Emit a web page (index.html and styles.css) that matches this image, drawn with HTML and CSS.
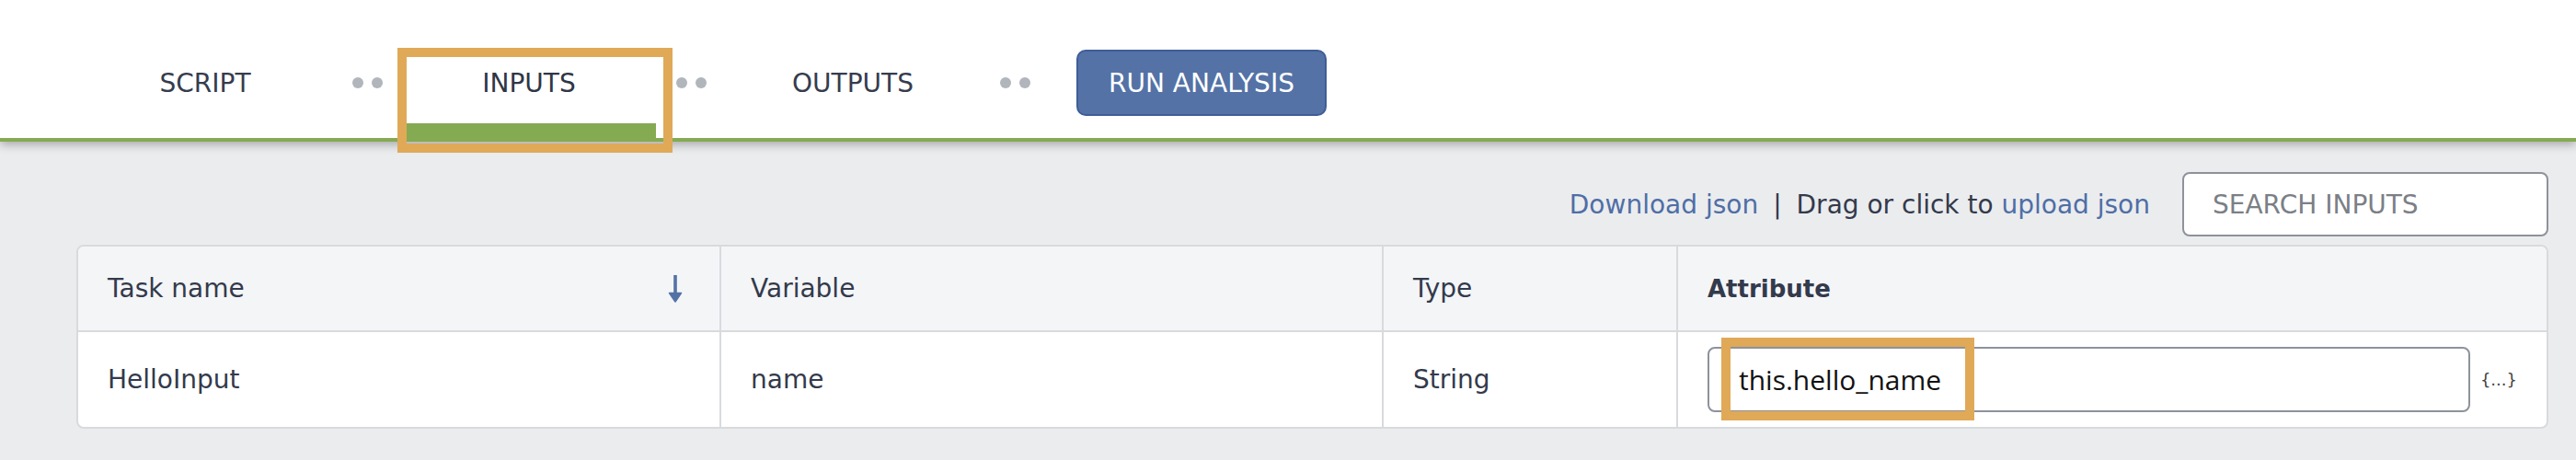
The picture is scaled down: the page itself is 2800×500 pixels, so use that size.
FILE: index.html
```html
<!DOCTYPE html>
<html lang="en">
<head>
    <meta charset="UTF-8">
    <title>Inputs</title>
    <link rel="stylesheet" href="styles.css">
</head>
<body>
    <div class="page">
        <nav class="steps">
            <div class="step">SCRIPT</div>
            <div class="dots"><span></span><span></span></div>
            <div class="step step-active">INPUTS</div>
            <div class="dots"><span></span><span></span></div>
            <div class="step">OUTPUTS</div>
            <div class="dots"><span></span><span></span></div>
            <button class="run-btn">RUN ANALYSIS</button>
        </nav>

        <div class="content">
            <div class="toolbar">
                <a class="link" href="#">Download json</a>
                <span class="sep">|</span>
                <span>Drag or click to <a class="link" href="#">upload json</a></span>
                <input class="search" type="text" placeholder="SEARCH INPUTS">
            </div>

            <div class="table-wrap">
                <table class="inputs-table">
                    <colgroup>
                        <col class="col-task">
                        <col class="col-var">
                        <col class="col-type">
                        <col>
                    </colgroup>
                    <thead>
                        <tr>
                            <th>
                                <div class="th-sort">
                                    <span>Task name</span>
                                    <svg class="sort-icon" width="16" height="30" viewBox="0 0 16 30">
                                        <rect x="6.2" y="0" width="3.6" height="21" fill="#5472a6"/>
                                        <path d="M1.5 19.5 L14.5 19.5 L8 29 Z" fill="#5472a6" stroke="#5472a6" stroke-linejoin="round" stroke-width="1.5"/>
                                    </svg>
                                </div>
                            </th>
                            <th>Variable</th>
                            <th>Type</th>
                            <th class="th-bold">Attribute</th>
                        </tr>
                    </thead>
                    <tbody>
                        <tr>
                            <td>HelloInput</td>
                            <td>name</td>
                            <td>String</td>
                            <td>
                                <div class="attr-cell">
                                    <input class="attr-input" type="text" value="this.hello_name">
                                    <span class="expr">{...}</span>
                                </div>
                            </td>
                        </tr>
                    </tbody>
                </table>
            </div>
        </div>

        <!-- highlight boxes -->
        <div class="highlight hl-tab"></div>
        <div class="highlight hl-attr"></div>
    </div>
</body>
</html>
```

FILE: styles.css
```css
body {
    margin: 0;
    background: #ebecee;
    font-family: 'DejaVu Sans', 'Open Sans', Arial, sans-serif;
    font-size: 28px;
    color: #333a4c;
}
.page {
    position: relative;
    min-height: 500px;
}
.steps {
    position: relative;
    z-index: 1;
    display: flex;
    align-items: center;
    height: 120px;
    padding: 30px 0 0 85px;
    background: white;
    border-bottom: 4px solid #84aa52;
    box-shadow: 0 3px 10px rgba(0,0,0,0.3);
}
.step {
    width: 276px;
    height: 120px;
    display: flex;
    align-items: center;
    justify-content: center;
    color: #353c4e;
}
.step-active {
    box-shadow: inset 0 -16px 0 #84aa52;
    color: #2f3646;
}
.dots {
    width: 76px;
    display: flex;
    justify-content: center;
    gap: 9px;
}
.dots span {
    width: 12px;
    height: 12px;
    border-radius: 50%;
    background: #b1b5bc;
}
.run-btn {
    margin-left: 29px;
    width: 272px;
    height: 72px;
    background: #5472a6;
    border: 2px solid #3f5d96;
    border-radius: 10px;
    color: white;
    font-family: inherit;
    font-size: 28px;
    padding: 0;
}
.content {
    padding: 33px 30px 0 83px;
}
.toolbar {
    display: flex;
    justify-content: flex-end;
    align-items: center;
    white-space: pre;
}
.link {
    color: #4f6ea6;
    text-decoration: none;
}
.sep {
    padding: 0 16px;
}
.search {
    margin-left: 35px;
    width: 398px;
    height: 70px;
    box-sizing: border-box;
    border: 2px solid #8d929b;
    border-radius: 8px;
    padding: 0 0 0 31px;
    font-family: inherit;
    font-size: 28px;
    background: white;
}
.search::placeholder {
    color: #7b7f86;
}
.table-wrap {
    margin-top: 9px;
    border: 2px solid #d8dade;
    border-radius: 8px;
    overflow: hidden;
    background: white;
}
.inputs-table {
    width: 100%;
    table-layout: fixed;
    border-collapse: collapse;
}
.col-task { width: 698px; }
.col-var { width: 720px; }
.col-type { width: 320px; }
.inputs-table th,
.inputs-table td {
    text-align: left;
    padding: 0 32px;
    border-left: 2px solid #d8dade;
    font-weight: normal;
}
.inputs-table th:first-child,
.inputs-table td:first-child {
    border-left: none;
}
.inputs-table th {
    height: 91px;
    background: #f4f5f7;
    border-bottom: 2px solid #d8dade;
}
.inputs-table td {
    height: 103px;
}
.th-bold {
    font-weight: bold !important;
    font-size: 26px;
}
.th-sort {
    display: flex;
    align-items: center;
    justify-content: space-between;
    padding-right: 8px;
}
.attr-cell {
    display: flex;
    align-items: center;
    gap: 11px;
}
.attr-input {
    flex: 1;
    height: 71px;
    box-sizing: border-box;
    border: 2px solid #8d929b;
    border-radius: 8px;
    padding: 0 0 0 32px;
    font-family: 'Open Sans', Arial, sans-serif;
    font-size: 30px;
    color: #111;
}
.expr {
    font-size: 18px;
    color: #444;
}
.highlight {
    position: absolute;
    z-index: 2;
    border: 10px solid #e0a957;
    box-sizing: border-box;
}
.hl-tab {
    left: 432px;
    top: 52px;
    width: 299px;
    height: 114px;
}
.hl-attr {
    left: 1871px;
    top: 367px;
    width: 275px;
    height: 90px;
}
```
